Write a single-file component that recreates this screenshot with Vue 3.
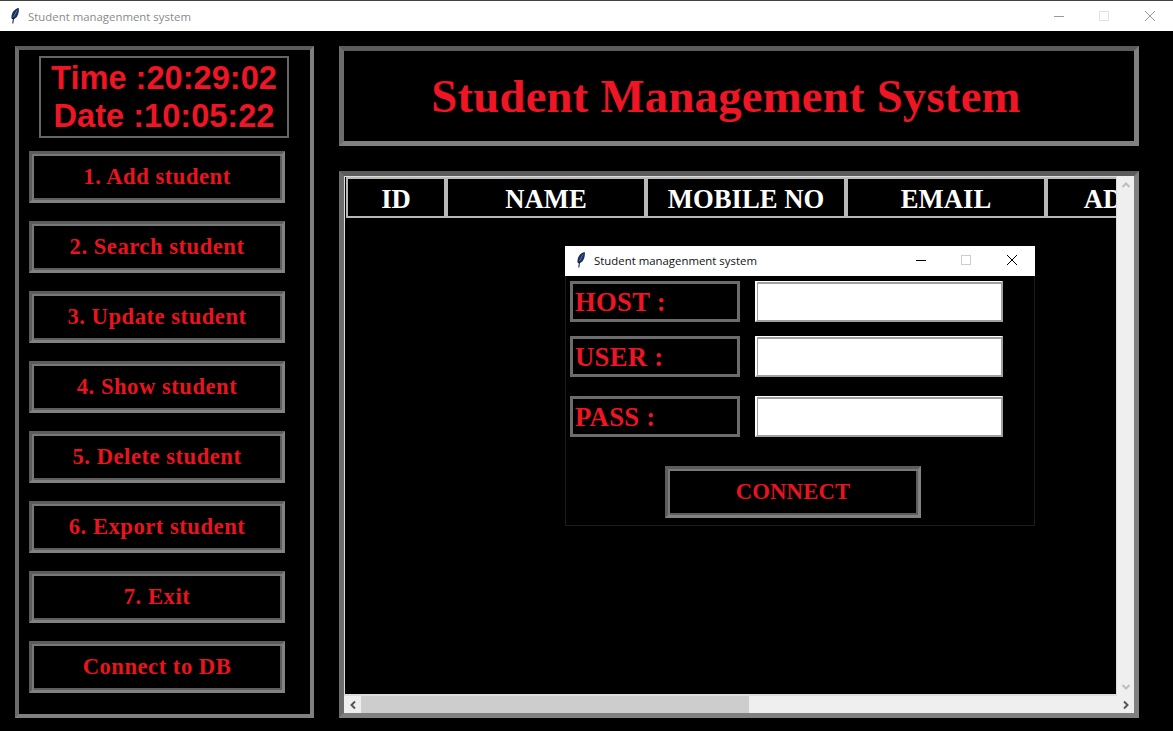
<script setup>
const menu = [
  "1. Add student",
  "2. Search student",
  "3. Update student",
  "4. Show student",
  "5. Delete student",
  "6. Export student",
  "7. Exit",
  "Connect to DB",
];
const columns = ["ID", "NAME", "MOBILE NO", "EMAIL", "ADDRESS"];
const fields = ["HOST :", "USER :", "PASS :"];
</script>

<template>
  <div class="app">
    <header class="titlebar inactive">
      <svg class="feather" viewBox="0 0 8 16">
        <path d="M7.800 0C3.800 .6 .4 4.300 .4 9.500C.4 10.800 1.200 11.500 2.500 11.300C6 10.200 8.400 5.500 7.800 0Z" fill="#1b2f5c" />
        <path d="M6 2.500L2.500 9" fill="none" stroke="#6f86b5" stroke-width=".8" />
        <path d="M2.500 10L1.800 15.500" fill="none" stroke="#0b1530" stroke-width="1" />
      </svg>
      <span class="caption">Student managenment system</span>
      <div class="controls">
        <svg viewBox="0 0 10 10"><path d="M0 5.500H10" stroke="#999" /></svg>
        <svg viewBox="0 0 10 10"><rect x=".5" y=".5" width="9" height="9" fill="none" stroke="#e2e2e2" /></svg>
        <svg viewBox="0 0 10 10"><path d="M0 0L10 10M10 0L0 10" stroke="#999" /></svg>
      </div>
    </header>

    <main class="layout">
      <aside class="sidebar groove">
        <div class="clock">
          <div>Time :20:29:02</div>
          <div>Date :10:05:22</div>
        </div>
        <button v-for="item in menu" :key="item" class="btn">{{ item }}</button>
      </aside>

      <div class="content">
        <div class="heading groove">Student Management System</div>

        <section class="table-frame groove">
          <div class="canvas">
            <div class="table-head">
              <div v-for="col in columns" :key="col" class="cell">{{ col }}</div>
            </div>
          </div>
          <div class="vbar">
            <svg viewBox="0 0 10 6"><path d="M1.500 5L5 1.500L8.500 5" fill="none" stroke="#bdbdbd" stroke-width="2" /></svg>
            <svg viewBox="0 0 10 6"><path d="M1.500 1L5 4.500L8.500 1" fill="none" stroke="#bdbdbd" stroke-width="2" /></svg>
          </div>
          <div class="hbar">
            <svg viewBox="0 0 6 10"><path d="M5 1.500L1.500 5L5 8.500" fill="none" stroke="#555" stroke-width="2" /></svg>
            <div class="thumb"></div>
            <svg viewBox="0 0 6 10"><path d="M1 1.500L4.500 5L1 8.500" fill="none" stroke="#555" stroke-width="2" /></svg>
          </div>

          <div class="dialog">
            <header class="titlebar small">
              <svg class="feather" viewBox="0 0 8 16">
                <path d="M7.800 0C3.800 .6 .4 4.300 .4 9.500C.4 10.800 1.200 11.500 2.500 11.300C6 10.200 8.400 5.500 7.800 0Z" fill="#1b2f5c" />
                <path d="M6 2.500L2.500 9" fill="none" stroke="#6f86b5" stroke-width=".8" />
                <path d="M2.500 10L1.800 15.500" fill="none" stroke="#0b1530" stroke-width="1" />
              </svg>
              <span class="caption">Student managenment system</span>
              <div class="controls">
                <svg viewBox="0 0 10 10"><path d="M0 5.500H10" stroke="#000" /></svg>
                <svg viewBox="0 0 10 10"><rect x=".5" y=".5" width="9" height="9" fill="none" stroke="#ccc" /></svg>
                <svg viewBox="0 0 10 10"><path d="M0 0L10 10M10 0L0 10" stroke="#000" /></svg>
              </div>
            </header>
            <div class="form">
              <div v-for="field in fields" :key="field" class="row">
                <label class="field-label">{{ field }}</label>
                <input class="entry" type="text" />
              </div>
              <button class="btn connect">CONNECT</button>
            </div>
          </div>
        </section>
      </div>
    </main>
  </div>
</template>

<style>
html,
body {
  background: #000;
  overflow: hidden;
}
</style>

<style scoped>
.app {
  width: 1173px;
  height: 731px;
  background: #000;
  overflow: hidden;
}

.titlebar {
  height: 31px;
  box-sizing: border-box;
  border-top: 1px solid #444;
  background: #fff;
  display: flex;
  align-items: center;
  padding-left: 11px;
  font-family: "Open Sans", sans-serif;
  font-size: 11.4px;
}

.titlebar.inactive .caption {
  color: #8a8a8a;
}

.caption {
  margin-left: 9px;
  color: #111;
}

.feather {
  width: 8px;
  height: 16px;
  flex: none;
}

.controls {
  margin-left: auto;
  display: flex;
  gap: 35px;
  padding-right: 18px;
}

.controls svg {
  width: 10px;
  height: 10px;
  display: block;
}

.controls svg:last-child {
  margin-left: 1px;
}

.titlebar.small {
  height: 30px;
  border-top: 0;
  margin: 0 -1px;
  padding: 0 0 2px 12px;
}

.layout {
  display: flex;
  gap: 25px;
  padding: 15px 0 0 15px;
}

.groove {
  box-sizing: border-box;
  border: 5px solid;
  border-color: #5c5c5c #808080 #808080 #6c6c6c;
}

.sidebar {
  width: 299px;
  height: 672px;
  display: flex;
  flex-direction: column;
  align-items: flex-start;
  gap: 18px;
  padding: 6px 0 0 10px;
  border-width: 4px;
}

.clock {
  width: 250px;
  height: 82px;
  box-sizing: border-box;
  border: 2px solid #666;
  margin: 0 0 -5px 10px;
  padding-top: 1px;
  color: #ee1525;
  font-family: "Liberation Sans", Arial, sans-serif;
  font-weight: 700;
  font-size: 32.6px;
  line-height: 38px;
  text-align: center;
  white-space: nowrap;
}

.btn {
  display: block;
  width: 256px;
  height: 52px;
  flex: none;
  box-sizing: border-box;
  padding: 0;
  background: #000;
  border: 3px solid;
  border-color: #5c5c5c #828282 #828282 #5c5c5c;
  box-shadow: inset 2px 2px 0 #787878, inset -2px -2px 0 #5e5e5e;
  color: #e8141f;
  font-family: "Liberation Serif", "Times New Roman", serif;
  font-weight: 700;
  font-size: 22.67px;
  letter-spacing: 0.5px;
}

.content {
  width: 800px;
  display: flex;
  flex-direction: column;
  gap: 25px;
}

.heading {
  height: 100px;
  display: flex;
  align-items: center;
  justify-content: center;
  padding-right: 26px;
  color: #ee1525;
  font-family: "Liberation Serif", "Times New Roman", serif;
  font-weight: 700;
  font-size: 46.67px;
  letter-spacing: 0.25px;
}

.table-frame {
  position: relative;
  height: 547px;
  display: grid;
  grid-template-columns: 773px 1fr;
  grid-template-rows: 520px 1fr;
}

.canvas {
  background: #000;
  overflow: hidden;
  padding: 0 0 0 1px;
  border: solid #ddd;
  border-width: 1px 1px 2px 1px;
}

.table-head {
  display: flex;
}

.cell {
  width: 200px;
  height: 41px;
  flex: none;
  box-sizing: border-box;
  border: 2px solid #b8b8b8;
  padding-top: 3px;
  display: flex;
  align-items: center;
  justify-content: center;
  color: #fff;
  font-family: "Liberation Serif", "Times New Roman", serif;
  font-weight: 700;
  font-size: 26.67px;
  white-space: nowrap;
}

.cell:first-child {
  width: 100px;
}

.vbar {
  background: #efefef;
  display: flex;
  flex-direction: column;
  justify-content: space-between;
  align-items: center;
  padding: 6px 0;
  box-sizing: border-box;
}

.vbar svg {
  width: 10px;
  height: 6px;
}

.hbar {
  grid-column: 1 / 3;
  background: #efefef;
  display: flex;
  align-items: center;
  justify-content: space-between;
  padding: 0 5px 0 6px;
  position: relative;
}

.hbar svg {
  width: 6px;
  height: 10px;
}

.thumb {
  position: absolute;
  left: 17px;
  top: 0;
  width: 388px;
  height: 100%;
  background: #cdcdcd;
}

.dialog {
  position: absolute;
  left: 221px;
  top: 70px;
  width: 470px;
  height: 280px;
  box-sizing: border-box;
  background: #000;
  border: 1px solid #1c1c1c;
  border-top: 0;
}

.form {
  padding: 5px 0 0 4px;
}

.row {
  display: flex;
  gap: 15px;
  height: 41px;
}

.row + .row {
  margin-top: 14px;
}

.row:nth-child(3) {
  margin-top: 19px;
}

.field-label {
  width: 170px;
  box-sizing: border-box;
  border: 3px solid #6c6c6c;
  padding: 2px 0 0 2px;
  display: flex;
  align-items: center;
  color: #ee1525;
  font-family: "Liberation Serif", "Times New Roman", serif;
  font-weight: 700;
  font-size: 26.67px;
  letter-spacing: 0.3px;
}

.entry {
  width: 248px;
  height: 41px;
  margin: 0;
  padding: 0;
  box-sizing: border-box;
  background: #fff;
  outline: none;
  border: solid;
  border-width: 1px 2px 2px 2px;
  border-color: #fff #a0a0a0 #a0a0a0 #fff;
  box-shadow: inset 1px 2px 0 #a0a0a0;
}

.connect {
  margin: 29px 0 0 95px;
  letter-spacing: 0.15px;
}
</style>
